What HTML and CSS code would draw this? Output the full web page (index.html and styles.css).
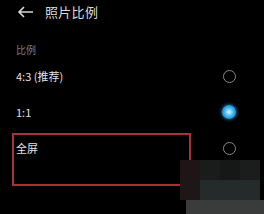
FILE: index.html
```html
<!DOCTYPE html>
<html lang="zh-CN">
<head>
  <meta charset="UTF-8">
  <title>照片比例</title>
  <link rel="stylesheet" href="styles.css">
</head>
<body>
  <div class="screen">
    <!-- 顶部标题栏 -->
    <div class="top-bar">
      <svg class="back" width="17" height="12" viewBox="0 0 17 12">
        <path d="M16 6H2M7 1L2 6l5 5" fill="none" stroke="#d8d8d8" stroke-width="1.6"/>
      </svg>
      <span class="title">照片比例</span>
    </div>

    <div class="section-label">比例</div>

    <!-- 比例选项 -->
    <div class="option">
      <span>4:3 (推荐)</span>
      <span class="radio"></span>
    </div>
    <div class="option">
      <span>1:1</span>
      <span class="radio checked"></span>
    </div>
    <div class="option">
      <span>全屏</span>
      <span class="radio"></span>
    </div>

    <!-- 标注框 -->
    <div class="mark-box"></div>

    <!-- 马赛克水印 -->
    <div class="mosaic">
      <i class="m1"></i><i class="m2"></i><i class="m3"></i><i class="m4"></i>
      <i class="m5"></i><i class="m6"></i><i class="m6"></i><i class="m6"></i>
    </div>
    <div class="mosaic-bottom"></div>
  </div>
</body>
</html>
```

FILE: styles.css
```css
body {
  margin: 0;
  background: #000;
  font-family: "Noto Sans CJK SC", "Noto Sans", sans-serif;
}

.screen {
  position: relative;
  width: 264px;
  height: 214px;
  overflow: hidden;
  background: #000;
}

/* 标题栏 */
.top-bar {
  display: flex;
  align-items: center;
  height: 24px;
  padding-left: 17px;
}

.back {
  display: block;
  margin-top: -1px;
}

.title {
  margin-left: 11px;
  color: #dcdcdc;
  font-size: 13px;
  letter-spacing: 0.3px;
  line-height: 24px;
}

.section-label {
  margin-top: 19px;
  padding-left: 16px;
  color: #7c7c7c;
  font-size: 10px;
  line-height: 14px;
}

.option {
  display: flex;
  justify-content: space-between;
  align-items: center;
  height: 36px;
  padding: 0 28px 0 16px;
  color: #e2e2e2;
  font-size: 11px;
}

.section-label + .option {
  margin-top: 1px;
}

.radio {
  width: 13px;
  height: 13px;
  border: 1px solid #8a8a8a;
  border-radius: 50%;
  box-sizing: border-box;
}

.radio.checked {
  width: 14px;
  height: 14px;
  border: none;
  background: radial-gradient(circle, #d8f4ff 0, #7fd4fb 25%, #27a6e6 55%, #1a8fd0 100%);
  box-shadow: 0 0 3px 1px rgba(40, 150, 230, 0.55);
}

/* 红色标注框 */
.mark-box {
  position: absolute;
  left: 12px;
  top: 133px;
  width: 179px;
  height: 53px;
  border: 2px solid #a8313c;
  box-sizing: border-box;
}

/* 水印马赛克 */
.mosaic {
  position: absolute;
  left: 180px;
  top: 160px;
  display: grid;
  grid-template-columns: repeat(4, 20px);
  grid-template-rows: repeat(2, 20px);
}

.mosaic i { display: block; }
.m1 { background: #1f1416; }
.m2 { background: #1a1c1c; }
.m3 { background: #161818; }
.m4 { background: #1b1d1d; }
.m5 { background: #1d1718; }
.m6 { background: #252a2a; }

.mosaic-bottom {
  position: absolute;
  left: 186px;
  top: 200px;
  width: 78px;
  height: 14px;
  background: #3a3b3b;
}
```
